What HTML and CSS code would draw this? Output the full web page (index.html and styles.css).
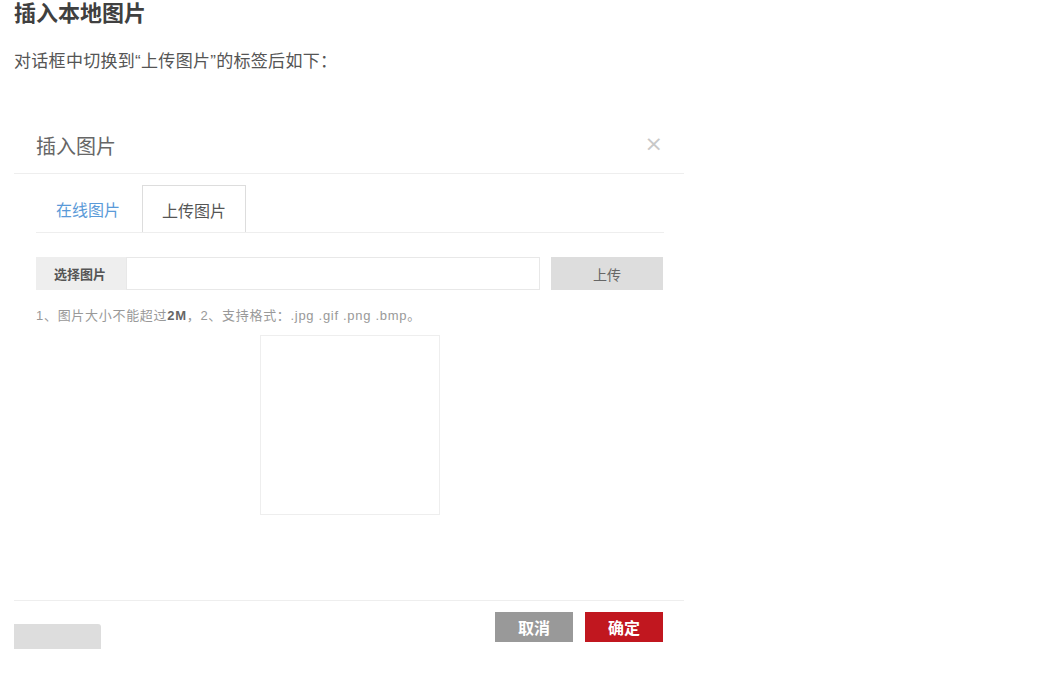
FILE: index.html
```html
<!DOCTYPE html>
<html lang="zh-CN">
<head>
<meta charset="utf-8">
<title>插入本地图片</title>
<link rel="stylesheet" href="styles.css">
</head>
<body>
<div class="article">
  <h2 class="heading">插入本地图片</h2>
  <p class="desc">对话框中切换到“上传图片”的标签后如下：</p>
  <div class="dialog">
    <div class="dlg-head">
      <span class="dlg-title">插入图片</span>
      <span class="dlg-close">×</span>
    </div>
    <div class="dlg-body">
      <div class="tabs">
        <div class="tab">在线图片</div>
        <div class="tab active">上传图片</div>
      </div>
      <div class="upload-row">
        <div class="pick-label">选择图片</div>
        <div class="pick-input"></div>
        <div class="upload-btn">上传</div>
      </div>
      <div class="hint">1、图片大小不能超过<b>2M</b>，2、支持格式：.jpg .gif .png .bmp。</div>
      <div class="preview"></div>
    </div>
    <div class="dlg-foot">
      <div class="stub"></div>
      <div class="btns">
        <div class="btn cancel">取消</div>
        <div class="btn ok">确定</div>
      </div>
    </div>
  </div>
</div>
</body>
</html>
```
FILE: styles.css
```css
* { box-sizing: border-box; }
body {
  margin: 0;
  background: #fff;
  font-family: "Liberation Sans", "Noto Sans CJK SC", sans-serif;
}
.article { padding: 0 14px; width: 698px; }
.heading {
  margin: 0;
  font-size: 22px;
  line-height: 28px;
  font-weight: bold;
  color: #404040;
}
.desc {
  margin: 22px 0 0;
  font-size: 17px;
  line-height: 24px;
  letter-spacing: 0.3px;
  color: #555;
}
.dialog { margin-top: 44px; width: 670px; }
.dlg-head {
  height: 56px;
  padding: 0 22px;
  display: flex;
  align-items: center;
  justify-content: space-between;
  border-bottom: 1px solid #eee;
}
.dlg-title { font-size: 20px; color: #666; line-height: 28px; margin-top: 3px; }
.dlg-close {
  font-family: "DejaVu Sans", sans-serif;
  font-size: 22px;
  color: #c8c8c8;
  line-height: 22px;
  margin-right: -1px;
  margin-top: -4px;
}
.dlg-body { padding: 11px 20px 85px 22px; }
.tabs {
  display: flex;
  gap: 2px;
  border-bottom: 1px solid #eee;
  height: 48px;
}
.tab {
  width: 104px;
  height: 47px;
  display: flex;
  align-items: center;
  justify-content: center;
  font-size: 16px;
  color: #5a9ad8;
  padding-top: 1px;
}
.tab.active {
  color: #555;
  border: 1px solid #ddd;
  border-bottom: none;
}
.upload-row {
  margin-top: 24px;
  display: flex;
  height: 33px;
}
.pick-label {
  width: 90px;
  background: #eee;
  font-size: 13px;
  font-weight: bold;
  color: #555;
  display: flex;
  align-items: center;
  padding-left: 18px;
}
.pick-input { width: 414px; border: 1px solid #e8e8e8; }
.upload-btn {
  width: 112px;
  margin-left: 11px;
  background: #ddd;
  font-size: 14px;
  color: #666;
  display: flex;
  align-items: center;
  justify-content: center;
}
.hint {
  margin-top: 16px;
  font-size: 13px;
  line-height: 20px;
  letter-spacing: 0.7px;
  color: #999;
}
.hint b { color: #666; }
.preview {
  margin: 9px auto 0;
  width: 180px;
  height: 180px;
  border: 1px solid #eee;
}
.dlg-foot {
  border-top: 1px solid #eee;
  display: flex;
  justify-content: space-between;
  align-items: flex-start;
  padding: 11px 21px 0 0;
}
.stub {
  width: 87px;
  height: 25px;
  margin-top: 12px;
  background: #ddd;
  border-top-right-radius: 3px;
}
.btns { display: flex; gap: 12px; }
.btn {
  width: 78px;
  height: 30px;
  display: flex;
  align-items: center;
  justify-content: center;
  font-size: 16px;
  font-weight: bold;
  color: #fff;
}
.cancel { background: #999; }
.ok { background: #c1171f; }
```
